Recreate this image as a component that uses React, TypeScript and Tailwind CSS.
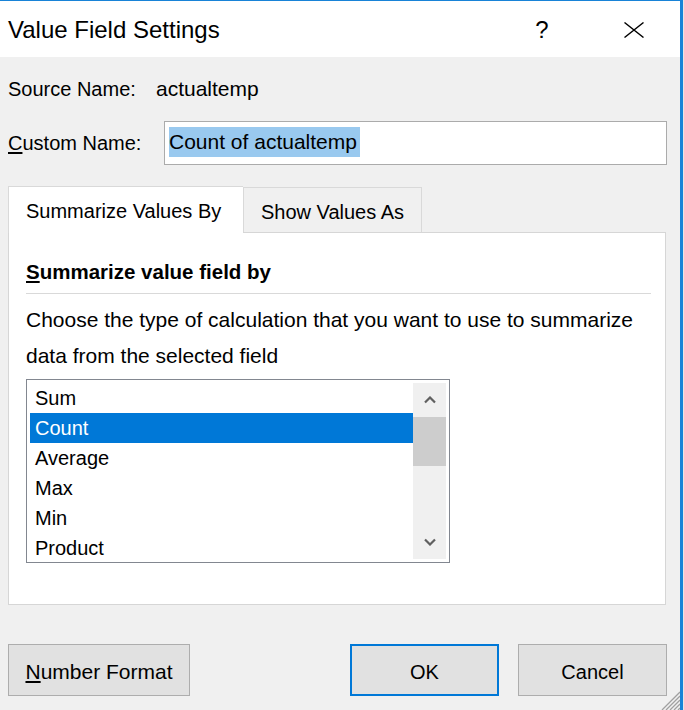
import React from "react";

const rows = ["Sum", "Count", "Average", "Max", "Min", "Product"];

function Chevron({ down }: { down?: boolean }) {
  return (
    <svg width="12" height="8" viewBox="0 0 12 8">
      <path
        d={down ? "M1 1.5 L6 6.5 L11 1.5" : "M1 6.5 L6 1.5 L11 6.5"}
        fill="none"
        stroke="#606060"
        strokeWidth="2.2"
      />
    </svg>
  );
}

export default function App() {
  return (
    <div className="w-[684px] h-[710px] bg-[#e6e6e6] font-['Liberation_Sans',Arial,sans-serif] text-black overflow-hidden">
      <div className="relative w-[683px] h-[710px] border-t border-t-[#1883d7] border-r-[3px] border-r-[#1883d7] bg-[#f0f0f0] flex flex-col">
        {/* Title bar */}
        <div className="h-[56px] bg-white flex items-start shrink-0">
          <div className="flex-1 pl-2 mt-[15px] text-[24px] leading-[28px]">Value Field Settings</div>
          <div className="w-[24px] mt-[15px] text-[24px] leading-[28px] text-center">?</div>
          <svg className="ml-[70px] mr-[36px] mt-[21px]" width="20" height="16" viewBox="0 0 20 16">
            <path d="M0.5 0.5 L19.5 15.5 M19.5 0.5 L0.5 15.5" stroke="#000" strokeWidth="1.4" />
          </svg>
        </div>

        {/* Source name */}
        <div className="h-[64px] flex items-center pl-2 text-[20px] shrink-0">
          <span className="w-[148px]">Source Name:</span>
          <span className="text-[21px]">actualtemp</span>
        </div>

        {/* Custom name */}
        <div className="h-[44px] flex items-center text-[20px] shrink-0">
          <span className="w-[164px] pl-2">
            <span className="underline underline-offset-2">C</span>ustom Name:
          </span>
          <div className="w-[503px] h-[44px] bg-white border border-[#ababab] pl-[4px] pt-[5px]">
            <span className="inline-block h-[30px] w-[191px] leading-[30px] text-[21px] bg-[#99c9ef] whitespace-nowrap">
              Count of actualtemp
            </span>
          </div>
        </div>

        {/* Tabs */}
        <div className="mt-[21px] pl-[8px] flex items-start h-[47px] -mb-px relative z-10 text-[20px] shrink-0">
          <div className="w-[235px] h-[47px] bg-white border-l border-t border-[#d9d9d9] pl-[17px] pt-[10px] leading-[28px] whitespace-nowrap">
            Summarize Values By
          </div>
          <div className="w-[179px] h-[45px] mt-px bg-[#f0f0f0] border-l border-t border-r border-[#d9d9d9] pt-[10px] leading-[28px] text-center whitespace-nowrap">
            Show Values As
          </div>
        </div>

        {/* Panel */}
        <div className="ml-[8px] w-[658px] h-[373px] bg-white border border-[#d6d6d6] pl-[17px] pr-[14px] flex flex-col shrink-0">
          <div className="mt-[25px] h-[28px] leading-[28px] text-[20.5px] font-bold whitespace-nowrap">
            <span className="underline underline-offset-2">S</span>ummarize value field by
          </div>
          <div className="mt-[7px] h-px bg-[#d9d9d9]" />
          <div className="mt-[8px] text-[21px] leading-[36px] whitespace-nowrap">
            Choose the type of calculation that you want to use to summarize
            <br />
            data from the selected field
          </div>
          <div className="mt-[5px] w-[424px] h-[184px] border border-[#828790] p-[3px] flex">
            <div className="w-[383px] h-[176px] overflow-hidden">
              {rows.map((r) => (
                <div
                  key={r}
                  className={
                    "h-[30px] leading-[30px] pl-[5px] text-[20px] " +
                    (r === "Count" ? "bg-[#0078d7] text-white" : "")
                  }
                >
                  {r}
                </div>
              ))}
            </div>
            <div className="w-[33px] h-[176px] bg-[#f0f0f0] flex flex-col">
              <div className="h-[34px] flex items-center justify-center">
                <Chevron />
              </div>
              <div className="h-[49px] bg-[#cdcdcd]" />
              <div className="flex-1" />
              <div className="h-[34px] flex items-center justify-center">
                <Chevron down />
              </div>
            </div>
          </div>
        </div>

        {/* Buttons */}
        <div className="mt-[39px] flex text-[20px] shrink-0">
          <div className="ml-[8px] w-[182px] h-[52px] bg-[#e1e1e1] border border-[#adadad] flex items-center justify-center pt-[4px] text-[21px]">
            <span>
              <span className="underline underline-offset-2">N</span>umber Format
            </span>
          </div>
          <div className="ml-[160px] w-[149px] h-[52px] bg-[#e1e1e1] border-2 border-[#0078d7] flex items-center justify-center pt-[4px]">
            OK
          </div>
          <div className="ml-[19px] w-[149px] h-[52px] bg-[#e1e1e1] border border-[#adadad] flex items-center justify-center pt-[4px]">
            Cancel
          </div>
        </div>

        {/* Resize grip */}
        <svg className="absolute right-0 bottom-0" width="19" height="19" viewBox="0 0 19 19">
          <path
            d="M1 19 L19 1 M5 19 L19 5 M9 19 L19 9 M13 19 L19 13 M17 19 L19 17"
            stroke="#a0a0a0"
            strokeWidth="1.3"
          />
        </svg>
      </div>
    </div>
  );
}
